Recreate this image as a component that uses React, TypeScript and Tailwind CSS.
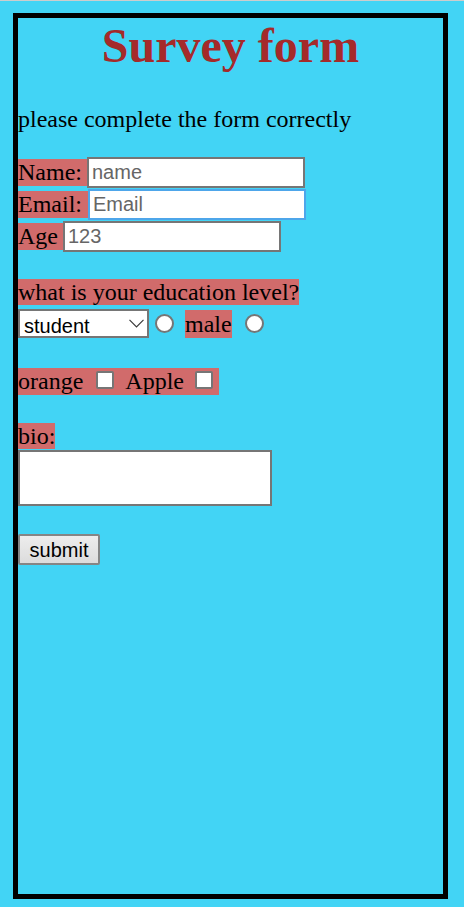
import React from "react";

export default function App() {
  const label =
    "inline-block bg-[#d16b6b] text-black text-[24px] font-['Liberation_Serif',serif] whitespace-pre";
  const input =
    "box-border h-[31px] w-[218px] border-2 border-[#767676] bg-white pl-[3px] text-[20px] text-black font-['Liberation_Sans',Arial,sans-serif] placeholder:text-[#666666] outline-none";
  const radio =
    "inline-block box-border h-[19px] w-[19px] rounded-full border-2 border-[#767676] bg-white";
  const check =
    "inline-block box-border h-[18px] w-[18px] rounded-[2px] border-2 border-[#767676] bg-white";
  return (
    <div className="min-h-[907px] w-full bg-[#42d4f5] border-t border-[#cdcdcd] pt-[12px] pl-[13px]">
      <div className="box-border w-[435px] h-[886px] border-[5px] border-black font-['Liberation_Serif',serif] text-black">
        <h1 className="text-center text-[48px] leading-[55px] font-bold text-[#a52a2a]">
          Survey form
        </h1>
        <p className="mt-[32px] text-[24px] leading-[28px]">
          please complete the form correctly
        </p>

        <div className="mt-[23px] flex flex-col">
          <div className="flex h-[32px] items-center">
            <span className={`${label} h-[27px] leading-[27px] w-[69px]`}>Name: </span>
            <input className={input} placeholder="name" />
          </div>
          <div className="flex h-[32px] items-center">
            <span className={`${label} h-[27px] leading-[27px] w-[70px]`}>Email: </span>
            <input
              className={`${input} !border-[#4ea6ea] w-[217px]`}
              placeholder="Email"
            />
          </div>
          <div className="flex h-[32px] items-center">
            <span className={`${label} h-[27px] leading-[27px] w-[45px]`}>Age </span>
            <input className={input} placeholder="123" />
          </div>
        </div>

        <div className="mt-[27px] flex">
          <span className={`${label} h-[26px] leading-[26px]`}>what is your education level?</span>
        </div>
        <div className="mt-[4px] flex h-[29px] items-center">
          <div className="relative h-[29px] w-[131px]">
            <select
              className="box-border h-[29px] w-[131px] appearance-none border-2 border-[#767676] bg-white pl-[4px] text-[20px] text-black font-['Liberation_Sans',Arial,sans-serif] outline-none"
              defaultValue="student"
            >
              <option value="student">student</option>
            </select>
            <svg
              className="pointer-events-none absolute right-[5px] top-[10px]"
              width="15"
              height="9"
              viewBox="0 0 15 9"
            >
              <path d="M0.5 0.8 L7.5 7.8 L14.5 0.8" fill="none" stroke="#3a3a3a" strokeWidth="1.2" />
            </svg>
          </div>
          <span className={`${radio} ml-[6px]`} />
          <span className={`${label} ml-[11px] h-[28px] leading-[28px]`}>male</span>
          <span className={`${radio} ml-[13px]`} />
        </div>

        <div className="mt-[30px] flex">
          <span className={`${label} flex h-[27px] items-center leading-[27px] pr-[6px]`}>
            <span>orange</span>
            <span className={`${check} ml-[13px]`} />
            <span className="ml-[11px]">Apple</span>
            <span className={`${check} ml-[11px]`} />
          </span>
        </div>

        <div className="mt-[28px] flex">
          <span className={`${label} h-[26px] leading-[26px]`}>bio:</span>
        </div>
        <div className="mt-[1px] box-border h-[56px] w-[254px] border-2 border-[#767676] bg-white" />

        <button className="mt-[28px] box-border h-[31px] w-[82px] rounded-[2px] border-2 border-[#858585] bg-gradient-to-b from-[#ededed] to-[#dcdcdc] text-[20px] text-black font-['Liberation_Sans',Arial,sans-serif] leading-none">
          submit
        </button>
      </div>
    </div>
  );
}
